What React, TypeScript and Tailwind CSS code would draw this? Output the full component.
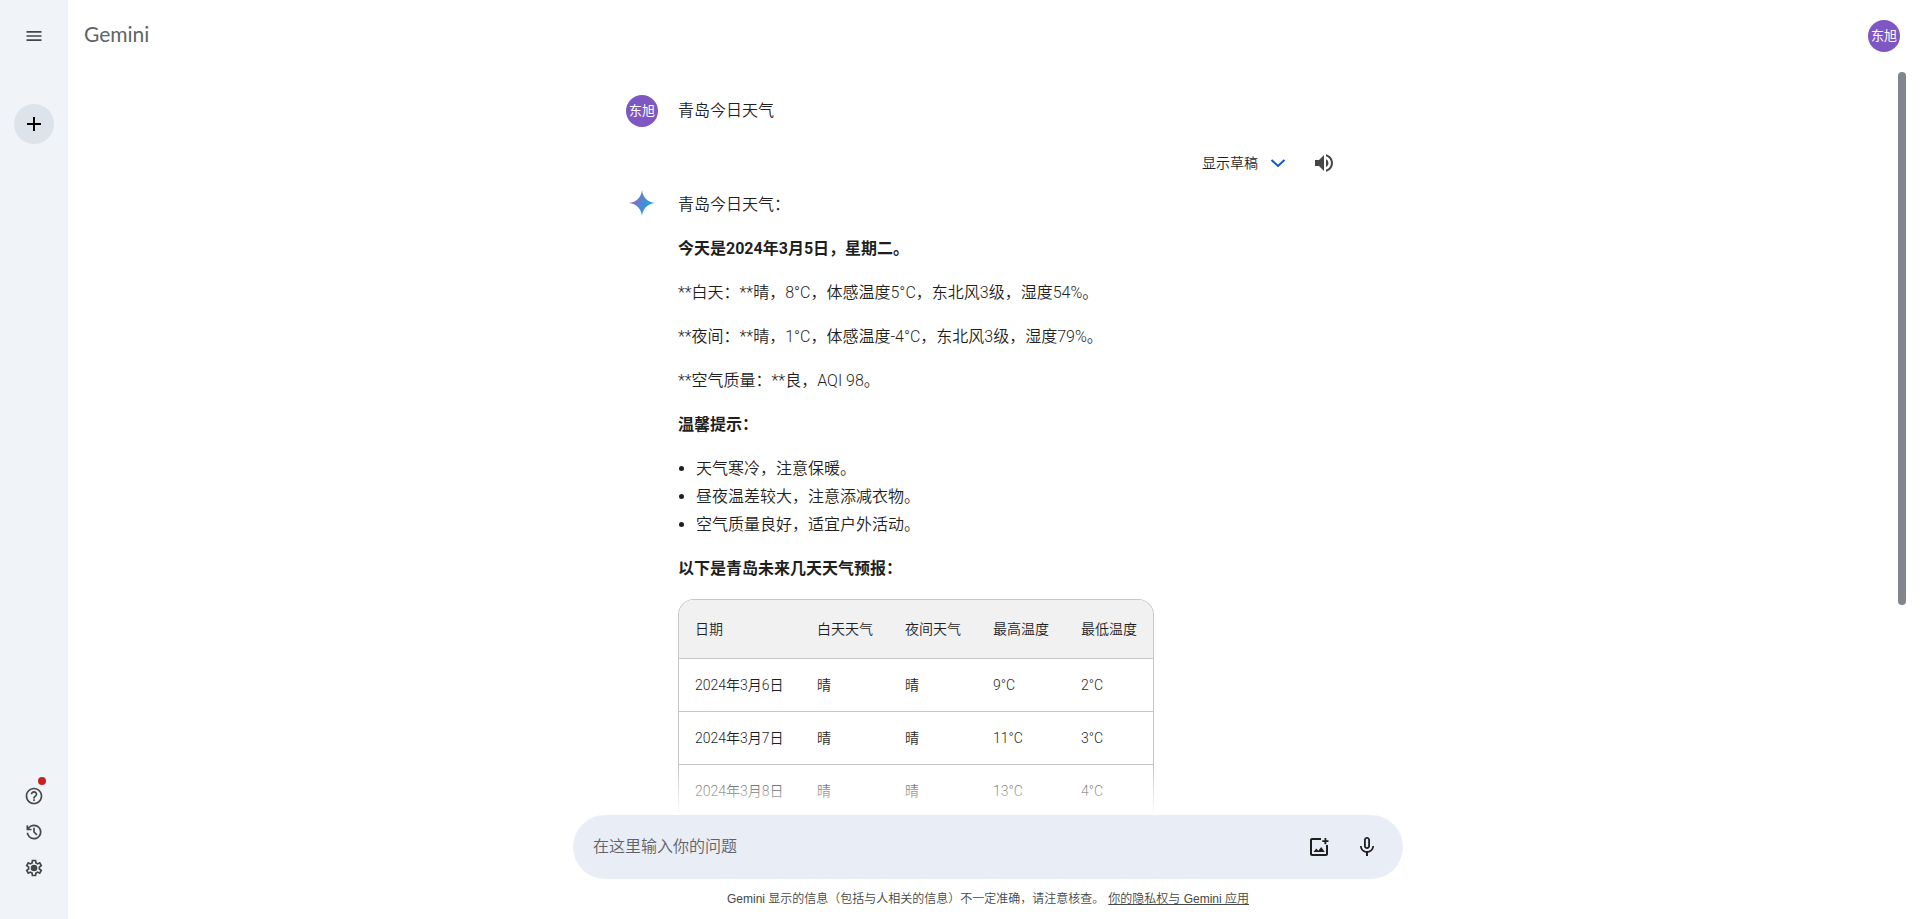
import React, { useState } from 'react';
import { MdAdd, MdHelpOutline, MdMenu, MdMicNone, MdVolumeUp } from 'react-icons/md';

const forecast = [
    { date: '2024年3月6日', day: '晴', night: '晴', high: '9°C', low: '2°C' },
    { date: '2024年3月7日', day: '晴', night: '晴', high: '11°C', low: '3°C' },
    { date: '2024年3月8日', day: '晴', night: '晴', high: '13°C', low: '4°C' }
];

const tips = ['天气寒冷，注意保暖。', '昼夜温差较大，注意添减衣物。', '空气质量良好，适宜户外活动。'];

const HistoryIcon = () => (
    <svg width="20" height="20" viewBox="0 -960 960 960" fill="currentColor">
        <path d="M480-120q-138 0-240.5-91.5T122-440h82q14 104 92.5 172T480-200q117 0 198.5-81.5T760-480q0-117-81.5-198.5T480-760q-69 0-129 32t-101 88h110v80H120v-240h80v94q51-64 124.5-99T480-840q75 0 140.5 28.5t114 77q48.5 48.5 77 114T840-480q0 75-28.5 140.5t-77 114q-48.5 48.5-114 77T480-120Zm112-192L440-464v-216h80v184l128 128-56 56Z" />
    </svg>
);

const SettingsIcon = () => (
    <svg width="20" height="20" viewBox="0 -960 960 960" fill="currentColor">
        <path d="m370-80-16-128q-13-5-24.5-12T307-235l-119 50L78-375l103-78q-1-7-1-13.5v-27q0-6.5 1-13.5L78-585l110-190 119 50q11-8 23-15t24-12l16-128h220l16 128q13 5 24.5 12t22.5 15l119-50 110 190-103 78q1 7 1 13.5v27q0 6.5-2 13.5l103 78-110 190-118-50q-11 8-23 15t-24 12L590-80H370Zm70-80h79l14-106q31-8 57.5-23.5T639-327l99 41 39-68-86-65q5-14 7-29.5t2-31.5q0-16-2-31.5t-7-29.5l86-65-39-68-99 42q-22-23-48.5-38.5T533-694l-13-106h-79l-14 106q-31 8-57.5 23.5T321-633l-99-41-39 68 86 64q-5 15-7 30t-2 32q0 16 2 31t7 30l-86 65 39 68 99-42q22 23 48.5 38.5T427-266l13 106Z" />
        <circle cx="482" cy="-480" r="160" />
    </svg>
);

const ImageAddIcon = () => (
    <svg width="24" height="24" viewBox="0 0 24 24" fill="currentColor">
        <path d="M14 3v2H5v14h14v-9h2v9c0 1.100-.9 2-2 2H5c-1.100 0-2-.9-2-2V5c0-1.100.9-2 2-2h9z" />
        <path d="M17.500 3h1.800v2.200H21.500v1.800h-2.200v2.200h-1.800V7h-2.200V5.200h2.200V3z" />
        <path d="M6.500 17l2.800-3.600 2 2.400 2.900-3.900L17.800 17H6.500z" />
    </svg>
);

const Sparkle = () => (
    <svg width="28" height="28" viewBox="0 0 28 28">
        <defs>
            <linearGradient id="sparkle" x1="4" y1="9" x2="25" y2="18" gradientUnits="userSpaceOnUse">
                <stop offset="0" stopColor="#9168c0" />
                <stop offset="0.45" stopColor="#5684d1" />
                <stop offset="0.85" stopColor="#1ba1e3" />
            </linearGradient>
        </defs>
        <path
            d="M14 1C14.600 8.200 19.800 13.400 27 14 19.800 14.600 14.600 19.800 14 27 13.400 19.800 8.200 14.600 1 14 8.200 13.400 13.400 8.200 14 1Z"
            fill="url(#sparkle)"
        />
    </svg>
);

const Avatar = () => (
    <div className="w-8 h-8 shrink-0 rounded-full bg-[#7e57c2] text-white text-[13px] font-normal flex items-center justify-center">
        东旭
    </div>
);

const Sidebar = () => (
    <aside className="w-[68px] shrink-0 bg-[#f0f4f9] flex flex-col items-center text-[#444746]">
        <button aria-label="菜单" className="mt-4 w-10 h-10 flex items-center justify-center">
            <MdMenu size={20} />
        </button>
        <button aria-label="发起新对话" className="mt-12 w-10 h-10 rounded-full bg-[#dde3ea] text-black flex items-center justify-center">
            <MdAdd size={24} />
        </button>
        <div className="mt-auto mb-[33px] flex flex-col">
            <button aria-label="帮助" className="relative w-9 h-9 flex items-center justify-center">
                <MdHelpOutline size={20} />
                <span className="absolute right-1.5 -top-px w-2 h-2 rounded-full bg-[#c5221f]"></span>
            </button>
            <button aria-label="活动记录" className="w-9 h-9 flex items-center justify-center">
                <HistoryIcon />
            </button>
            <button aria-label="设置" className="w-9 h-9 flex items-center justify-center">
                <SettingsIcon />
            </button>
        </div>
    </aside>
);

const ForecastTable = () => (
    <div className="w-fit rounded-t-2xl border border-b-0 border-[#c4c7c5] overflow-hidden">
        <table className="text-sm leading-5 text-left">
            <thead className="bg-[#f1f1f1]">
                <tr className="h-[58px]">
                    <th className="w-[122px] pl-4 font-[350]">日期</th>
                    <th className="w-[88px] px-4 font-[350]">白天天气</th>
                    <th className="w-[88px] px-4 font-[350]">夜间天气</th>
                    <th className="w-[88px] px-4 font-[350]">最高温度</th>
                    <th className="w-[88px] px-4 font-[350]">最低温度</th>
                </tr>
            </thead>
            <tbody>
                {forecast.map(row => (
                    <tr key={row.date} className="h-[53px] border-t border-[#c4c7c5]">
                        <td className="pl-4 whitespace-nowrap">{row.date}</td>
                        <td className="px-4">{row.day}</td>
                        <td className="px-4">{row.night}</td>
                        <td className="px-4">{row.high}</td>
                        <td className="px-4">{row.low}</td>
                    </tr>
                ))}
            </tbody>
        </table>
    </div>
);

const Conversation = () => (
    <div className="w-full max-w-[724px] mx-auto leading-7">
        <div className="pt-[23px] flex items-center gap-5">
            <Avatar />
            <p>青岛今日天气</p>
        </div>
        <div className="mt-4 h-10 pr-1.5 flex items-center justify-end gap-[18px] text-sm">
            <button className="h-10 flex items-center gap-3">
                显示草稿
                <svg className="text-[#0b57d0]" width="16" height="16" viewBox="0 0 16 16" fill="none" stroke="currentColor" strokeWidth="2">
                    <path d="M1.500 5l6.500 6 6.500-6" />
                </svg>
            </button>
            <button aria-label="朗读" className="w-10 h-10 flex items-center justify-center text-[#444746]">
                <MdVolumeUp size={24} />
            </button>
        </div>
        <div className="mt-2 flex gap-5">
            <div className="w-8 h-6 shrink-0 flex items-center justify-center">
                <Sparkle />
            </div>
            <div className="flex flex-col gap-4">
                <p>青岛今日天气：</p>
                <p className="font-bold">今天是2024年3月5日，星期二。</p>
                <p>**白天：**晴，8°C，体感温度5°C，东北风3级，湿度54%。</p>
                <p>**夜间：**晴，1°C，体感温度-4°C，东北风3级，湿度79%。</p>
                <p>**空气质量：**良，AQI 98。</p>
                <p className="font-bold">温馨提示：</p>
                <ul className="list-disc pl-[18px]">
                    {tips.map(tip => (
                        <li key={tip}>{tip}</li>
                    ))}
                </ul>
                <p className="font-bold">以下是青岛未来几天天气预报：</p>
                <ForecastTable />
            </div>
        </div>
    </div>
);

export default function App() {
    const [prompt, setPrompt] = useState('');

    return (
        <div className="h-screen flex bg-white text-[#1f1f1f] font-[350] font-['Roboto','Noto_Sans_CJK_SC',sans-serif]">
            <Sidebar />
            <div className="flex-1 min-w-0 flex flex-col">
                <header className="h-[72px] shrink-0 pl-4 pr-5 flex items-center justify-between">
                    <h1 className="pb-1 text-[21px] font-normal text-[#5f6368] font-['Lato',sans-serif]">Gemini</h1>
                    <Avatar />
                </header>
                <main className="flex-1 min-h-0 flex pr-3.5">
                    <div className="relative flex-1 min-w-0 pl-2.5 overflow-hidden">
                        <Conversation />
                        <div className="absolute inset-x-0 bottom-0 h-12 bg-linear-to-b from-white/0 to-white"></div>
                    </div>
                    <div className="w-2 h-[533px] rounded-full bg-[#80868b]"></div>
                </main>
                <footer className="shrink-0 pr-3 flex flex-col items-center">
                    <div className="w-full max-w-[830px] h-16 rounded-full bg-[#e9eef6] pl-5 pr-3 flex items-center">
                        <input
                            type="text"
                            aria-label="在这里输入你的问题"
                            placeholder="在这里输入你的问题"
                            className="flex-1 min-w-0 bg-transparent outline-none placeholder:text-[#5f6368]"
                            value={prompt}
                            onChange={e => setPrompt(e.target.value)}
                        />
                        <button aria-label="上传图片" className="w-12 h-12 flex items-center justify-center">
                            <ImageAddIcon />
                        </button>
                        <button aria-label="使用麦克风" className="w-12 h-12 flex items-center justify-center">
                            <MdMicNone size={24} />
                        </button>
                    </div>
                    <p className="h-10 text-xs flex items-center gap-1 text-[#444746] font-['Liberation_Sans','Noto_Sans_CJK_SC',sans-serif]">
                        Gemini 显示的信息（包括与人相关的信息）不一定准确，请注意核查。
                        <a href="#privacy" className="underline">你的隐私权与 Gemini 应用</a>
                    </p>
                </footer>
            </div>
        </div>
    );
}
